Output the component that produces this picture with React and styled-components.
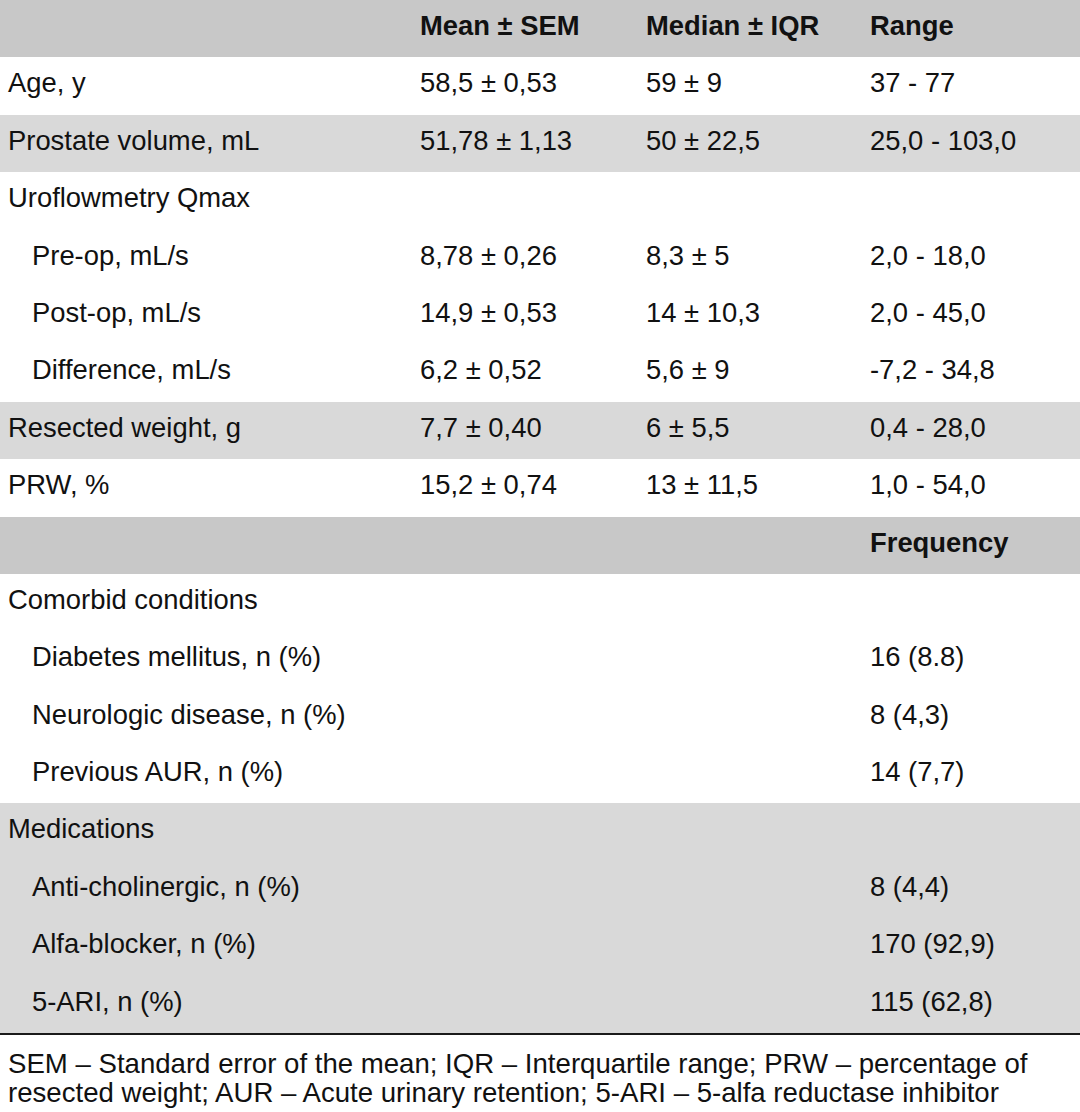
import styled, { createGlobalStyle } from "styled-components";

const GlobalStyle = createGlobalStyle`
  html, body {
    margin: 0;
    padding: 0;
    background: #ffffff;
  }
  body {
    font-family: "Liberation Sans", Arial, sans-serif;
    color: #111111;
  }
`;

const rows = [
  { type: "head", cells: ["", "Mean ± SEM", "Median ± IQR", "Range"] },
  { shade: "white", cells: ["Age, y", "58,5 ± 0,53", "59 ± 9", "37 - 77"] },
  { shade: "gray", cells: ["Prostate volume, mL", "51,78 ± 1,13", "50 ± 22,5", "25,0 - 103,0"] },
  { shade: "white", cells: ["Uroflowmetry Qmax", "", "", ""] },
  { shade: "white", indent: true, cells: ["Pre-op, mL/s", "8,78 ± 0,26", "8,3 ± 5", "2,0 - 18,0"] },
  { shade: "white", indent: true, cells: ["Post-op, mL/s", "14,9 ± 0,53", "14 ± 10,3", "2,0 - 45,0"] },
  { shade: "white", indent: true, cells: ["Difference, mL/s", "6,2 ± 0,52", "5,6 ± 9", "-7,2 - 34,8"] },
  { shade: "gray", cells: ["Resected weight, g", "7,7 ± 0,40", "6 ± 5,5", "0,4 - 28,0"] },
  { shade: "white", cells: ["PRW, %", "15,2 ± 0,74", "13 ± 11,5", "1,0 - 54,0"] },
  { type: "head", cells: ["", "", "", "Frequency"] },
  { shade: "white", cells: ["Comorbid conditions", "", "", ""] },
  { shade: "white", indent: true, cells: ["Diabetes mellitus, n (%)", "", "", "16 (8.8)"] },
  { shade: "white", indent: true, cells: ["Neurologic disease, n (%)", "", "", "8 (4,3)"] },
  { shade: "white", indent: true, cells: ["Previous AUR, n (%)", "", "", "14 (7,7)"] },
  { shade: "gray", cells: ["Medications", "", "", ""] },
  { shade: "gray", indent: true, cells: ["Anti-cholinergic, n (%)", "", "", "8 (4,4)"] },
  { shade: "gray", indent: true, cells: ["Alfa-blocker, n (%)", "", "", "170 (92,9)"] },
  { shade: "gray", indent: true, cells: ["5-ARI, n (%)", "", "", "115 (62,8)"] },
];

const App = () => {
  return (
    <>
      <GlobalStyle />
      <SPage>
        <STable>
          {rows.map((row, i) => (
            <SRow key={i} $variant={row.type === "head" ? "head" : row.shade}>
              {row.cells.map((cell, j) => (
                <SCell
                  key={j}
                  $bold={row.type === "head"}
                  $indent={j === 0 && row.indent}
                >
                  {cell}
                </SCell>
              ))}
            </SRow>
          ))}
        </STable>
        <SFootnote>
          SEM – Standard error of the mean; IQR – Interquartile range; PRW – percentage of
          <br />
          resected weight; AUR – Acute urinary retention; 5-ARI – 5-alfa reductase inhibitor
        </SFootnote>
      </SPage>
    </>
  );
};

const SPage = styled.div`
  width: 1080px;
  height: 1112px;
  overflow: hidden;
  background: #ffffff;
`;

const STable = styled.div`
  display: flex;
  flex-direction: column;
  border-bottom: 2px solid #1a1a1a;
`;

const rowColors = {
  head: "#c8c8c8",
  gray: "#d9d9d9",
  white: "#ffffff",
};

const SRow = styled.div`
  display: grid;
  grid-template-columns: 412px 226px 224px 1fr;
  height: 57.4px;
  align-items: center;
  padding-bottom: 6px;
  box-sizing: border-box;
  background: ${({ $variant }) => rowColors[$variant]};
`;

const SCell = styled.div`
  padding-left: ${({ $indent }) => ($indent ? "32px" : "8px")};
  font-size: 27.4px;
  font-weight: ${({ $bold }) => ($bold ? 700 : 400)};
  line-height: 1;
  white-space: nowrap;
  color: #111111;
`;

const SFootnote = styled.p`
  margin: 0;
  padding: 14px 8px 0 8px;
  font-size: 27.6px;
  line-height: 29px;
  white-space: nowrap;
  color: #111111;
`;

export default App;
